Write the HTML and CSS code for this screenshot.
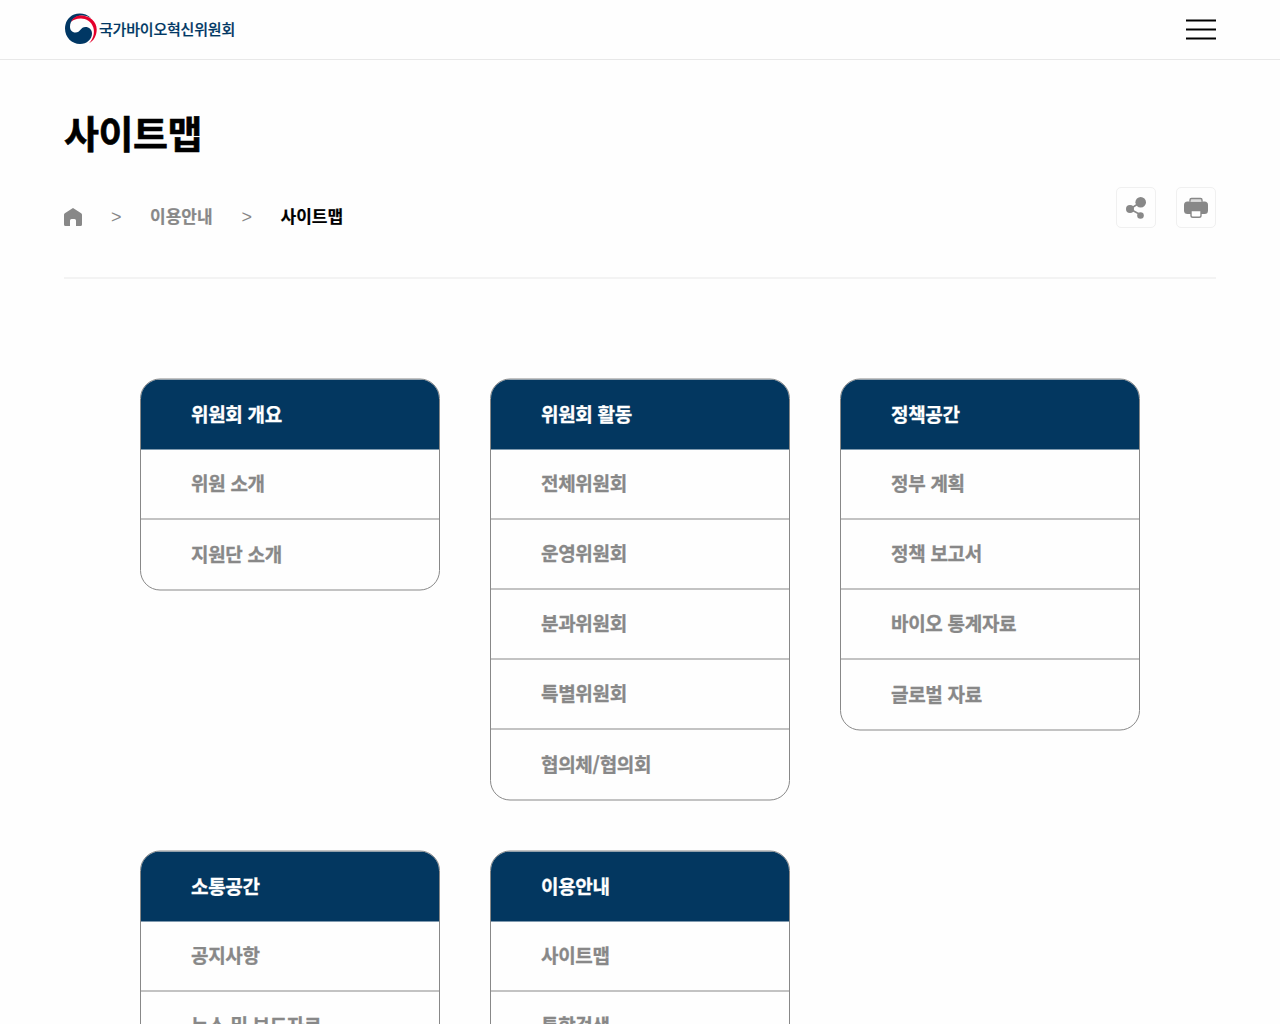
FILE: index.html
```html
<!DOCTYPE html>
<html lang="ko">
<head>
<meta charset="UTF-8">
<meta name="viewport" content="width=device-width, initial-scale=1.0">
<title>사이트맵 | 국가바이오혁신위원회</title>
<link rel="stylesheet" href="styles.css">
</head>
<body>
  <header class="header">
    <a href="#" class="logo">
      <svg class="logo-mark" width="34" height="33" viewBox="0 0 34 33">
        <path fill="#003764" d="M27 5C22 0 15-.5 10 1.500C4 4 1 9.500 1 15.500C1 24.500 8 31 16 31C23 31 28 26 28 20.500C28 16.500 25 14 21.500 14C16.500 14 16.500 19.500 11.500 19.500C8 19.500 6 17 6 13.500C6 7 12 2.500 18 2.500C21 2.500 24 3.300 27 5Z"/>
        <path fill="#e4002b" d="M7 9C9 4 14 2.200 18 2.500C26 3 32.700 8.500 32.700 16.500C32.700 23 29.500 28 25 30.300C29 26.500 31 20 29.300 14.500C27.500 8.500 22 5.500 17 5.500C12.500 5.500 9 7 7 9Z"/>
      </svg>
      <span class="logo-text">국가바이오혁신위원회</span>
    </a>
    <button type="button" class="btn-menu" aria-label="전체메뉴">
      <svg width="30" height="23" viewBox="0 0 30 23" stroke="#000" stroke-width="2">
        <path d="M0 2.500H30M0 11.500H30M0 20.500H30"/>
      </svg>
    </button>
  </header>

  <main class="container">
    <h1 class="page-title">사이트맵</h1>
    <div class="sub-bar">
      <nav class="breadcrumb">
        <a href="#" class="home" aria-label="홈">
          <svg width="18" height="20" viewBox="0 -1 18 20" fill="#888">
            <path d="M9 0L17.200 5.200Q18 5.700 18 6.700V16.500Q18 18 16.500 18H12V12.500Q12 11 10.500 11H7.500Q6 11 6 12.500V18H1.500Q0 18 0 16.500V6.700Q0 5.700.8 5.200Z"/>
          </svg>
        </a>
        <span class="arrow">&gt;</span>
        <a href="#">이용안내</a>
        <span class="arrow">&gt;</span>
        <a href="#" class="current">사이트맵</a>
      </nav>
      <div class="tools">
        <button type="button" class="btn-tool" aria-label="공유">
          <svg width="24" height="24" viewBox="0 0 24 24" fill="#888">
            <path d="M6 13L17 6M6 13L17 19" stroke="#888" stroke-width="1.500"/>
            <circle cx="16.700" cy="6.300" r="5.300"/>
            <circle cx="6" cy="13" r="4"/>
            <circle cx="16.500" cy="19.500" r="3.300"/>
          </svg>
        </button>
        <button type="button" class="btn-tool" aria-label="인쇄">
          <svg width="24" height="24" viewBox="0 0 24 24">
            <rect x="0" y="5.500" width="24" height="12.500" rx="3.500" fill="#888"/>
            <path d="M6 5.700V4Q6 2.500 7.500 2.500H16.500Q18 2.500 18 4V5.700" fill="#ddd" stroke="#888" stroke-width="1.400"/>
            <path d="M7 14.500H17V19.500Q17 21.300 15.200 21.300H8.800Q7 21.300 7 19.500Z" fill="#fff" stroke="#888" stroke-width="1.400"/>
          </svg>
        </button>
      </div>
    </div>

    <div class="sitemap">
      <section class="card">
        <h2>위원회 개요</h2>
        <ul>
          <li><a href="#">위원 소개</a></li>
          <li><a href="#">지원단 소개</a></li>
        </ul>
      </section>
      <section class="card">
        <h2>위원회 활동</h2>
        <ul>
          <li><a href="#">전체위원회</a></li>
          <li><a href="#">운영위원회</a></li>
          <li><a href="#">분과위원회</a></li>
          <li><a href="#">특별위원회</a></li>
          <li><a href="#">협의체/협의회</a></li>
        </ul>
      </section>
      <section class="card">
        <h2>정책공간</h2>
        <ul>
          <li><a href="#">정부 계획</a></li>
          <li><a href="#">정책 보고서</a></li>
          <li><a href="#">바이오 통계자료</a></li>
          <li><a href="#">글로벌 자료</a></li>
        </ul>
      </section>
      <section class="card">
        <h2>소통공간</h2>
        <ul>
          <li><a href="#">공지사항</a></li>
          <li class="next"><a href="#">뉴스 및 보도자료</a></li>
        </ul>
      </section>
      <section class="card">
        <h2>이용안내</h2>
        <ul>
          <li><a href="#">사이트맵</a></li>
          <li class="next"><a href="#">통합검색</a></li>
        </ul>
      </section>
    </div>
  </main>
</body>
</html>
```
FILE: styles.css
```css
* {
  margin: 0;
  padding: 0;
  box-sizing: border-box;
}
html {
  overflow: hidden;
}
body {
  font-family: "Noto Sans CJK KR", "Noto Sans", sans-serif;
  font-weight: 700;
  color: #000;
  background-color: #fefefe;
}
a {
  color: inherit;
  text-decoration: none;
}
ul {
  list-style: none;
}
button {
  background: none;
  border: 0;
}
svg {
  display: block;
}

/* header */
.header {
  display: flex;
  justify-content: space-between;
  align-items: center;
  height: 60px;
  padding: 0 64px;
  border-bottom: 1px solid #e8e8e8;
}
.logo {
  display: flex;
  align-items: center;
  gap: 1px;
}
.logo-text {
  padding-bottom: 2px;
  font-size: 15px;
  font-weight: 500;
  letter-spacing: -0.2px;
  line-height: 30px;
  color: #003764;
  -webkit-text-stroke: 0.2px;
}

/* title + breadcrumb */
.container {
  padding: 42px 64px 0;
}
.page-title {
  font-size: 38px;
  line-height: 60px;
  letter-spacing: -0.5px;
  -webkit-text-stroke: 0.6px;
}
.sub-bar {
  display: flex;
  justify-content: space-between;
  align-items: flex-start;
  height: 117px;
  padding-top: 25px;
  border-bottom: 2px solid #f3f3f3;
}
.breadcrumb {
  display: flex;
  align-items: center;
  gap: 29px;
  height: 60px;
  font-size: 17px;
  line-height: 26px;
  color: #888;
}
.breadcrumb a {
  padding-bottom: 2px;
  -webkit-text-stroke: 0.2px;
}
.breadcrumb .home {
  padding-bottom: 0;
}
.breadcrumb .arrow {
  width: 10px;
  padding-bottom: 1px;
  font-family: "Liberation Sans", sans-serif;
  font-size: 18px;
  font-weight: 400;
}
.breadcrumb .current {
  color: #000;
}
.tools {
  display: flex;
  gap: 20px;
}
.btn-tool {
  display: flex;
  align-items: center;
  justify-content: center;
  width: 40px;
  height: 41px;
  border: 1px solid #f0f0f0;
  border-radius: 5px;
}

/* sitemap */
.sitemap {
  display: grid;
  grid-template-columns: repeat(3, 300px);
  gap: 50px;
  justify-content: center;
  align-items: start;
  padding-top: 99px;
  transform: translateY(0.5px);
}
.card {
  border: 1px solid #888;
  border-radius: 20px;
  overflow: hidden;
  font-size: 19px;
  letter-spacing: -0.3px;
  -webkit-text-stroke: 0.3px;
}
.card h2 {
  height: 70px;
  padding-left: 50px;
  font-size: 19px;
  line-height: 68px;
  color: #fff;
  background-color: #033760;
}
.card li {
  height: 70px;
  padding-left: 50px;
  line-height: 66px;
  color: #888;
  border-bottom: 1px solid #888;
}
.card li:last-child {
  line-height: 68px;
  border-bottom: 0;
}
.card li.next {
  line-height: 66px;
}
```
